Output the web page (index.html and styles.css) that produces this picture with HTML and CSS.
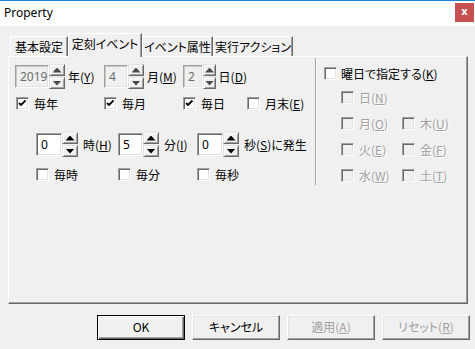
FILE: index.html
```html
<!DOCTYPE html>
<html lang="ja">
<head>
<meta charset="utf-8">
<title>Property</title>
<link rel="stylesheet" href="styles.css">
</head>
<body>
<div class="window">
  <div class="titlebar">
    <span class="title">Property</span>
    <span class="close">x</span>
  </div>
  <div class="client">
    <div class="tabs">
      <div class="tab t1">基本設定</div>
      <div class="tab active t2">定刻イベント</div>
      <div class="tab t3">イベント属性</div>
      <div class="tab t4">実行アクション</div>
    </div>
    <div class="panel">
      <div class="left">
        <div class="grid-date">
          <div class="item">
            <div class="edit dis w34">2019</div>
            <div class="ud dis"><span class="b up"><i></i></span><span class="b dn"><i></i></span></div>
            <span class="lab">年(<u>Y</u>)</span>
          </div>
          <div class="item">
            <div class="edit dis w24">4</div>
            <div class="ud dis"><span class="b up"><i></i></span><span class="b dn"><i></i></span></div>
            <span class="lab">月(<u>M</u>)</span>
          </div>
          <div class="item">
            <div class="edit dis w25">2</div>
            <div class="ud dis"><span class="b up"><i></i></span><span class="b dn"><i></i></span></div>
            <span class="lab">日(<u>D</u>)</span>
          </div>
          <div></div>
          <label class="check c1"><span class="cb on"><svg viewBox="0 0 11 11" width="11" height="11"><path d="M2 5 L4 7 L8.5 2.5" fill="none" stroke="#000" stroke-width="1.8"/></svg></span><span>毎年</span></label>
          <label class="check"><span class="cb on"><svg viewBox="0 0 11 11" width="11" height="11"><path d="M2 5 L4 7 L8.5 2.5" fill="none" stroke="#000" stroke-width="1.8"/></svg></span><span>毎月</span></label>
          <label class="check"><span class="cb on"><svg viewBox="0 0 11 11" width="11" height="11"><path d="M2 5 L4 7 L8.5 2.5" fill="none" stroke="#000" stroke-width="1.8"/></svg></span><span>毎日</span></label>
          <label class="check"><span class="cb"></span><span>月末(<u>E</u>)</span></label>
        </div>
        <div class="grid-time">
          <div class="item">
            <div class="edit w26">0</div>
            <div class="ud"><span class="b up"><i></i></span><span class="b dn"><i></i></span></div>
            <span class="lab l2">時(<u>H</u>)</span>
          </div>
          <div class="item">
            <div class="edit w25">5</div>
            <div class="ud"><span class="b up"><i></i></span><span class="b dn"><i></i></span></div>
            <span class="lab l2">分(<u>I</u>)</span>
          </div>
          <div class="item">
            <div class="edit w26">0</div>
            <div class="ud"><span class="b up"><i></i></span><span class="b dn"><i></i></span></div>
            <span class="lab l2">秒(<u>S</u>)に発生</span>
          </div>
          <label class="check"><span class="cb"></span><span>毎時</span></label>
          <label class="check"><span class="cb"></span><span>毎分</span></label>
          <label class="check"><span class="cb"></span><span>毎秒</span></label>
        </div>
      </div>
      <div class="sep"></div>
      <div class="right">
        <label class="check head"><span class="cb"></span><span>曜日で指定する(<u>K</u>)</span></label>
        <div class="grid-week">
          <label class="check dis"><span class="cb"></span><span>日(<u>N</u>)</span></label>
          <div></div>
          <label class="check dis"><span class="cb"></span><span>月(<u>O</u>)</span></label>
          <label class="check dis"><span class="cb"></span><span>木(<u>U</u>)</span></label>
          <label class="check dis"><span class="cb"></span><span>火(<u>E</u>)</span></label>
          <label class="check dis"><span class="cb"></span><span>金(<u>F</u>)</span></label>
          <label class="check dis"><span class="cb"></span><span>水(<u>W</u>)</span></label>
          <label class="check dis"><span class="cb"></span><span>土(<u>T</u>)</span></label>
        </div>
      </div>
    </div>
    <div class="buttons">
      <div class="btn default">OK</div>
      <div class="btn">キャンセル</div>
      <div class="btn dis">適用(<u>A</u>)</div>
      <div class="btn dis">リセット(<u>R</u>)</div>
    </div>
  </div>
</div>
</body>
</html>
```
FILE: styles.css
```css
* { box-sizing: border-box; }
html, body {
  margin: 0;
  padding: 0;
  background: #f0f0f0;
}
body {
  font-family: "Noto Sans CJK JP", "Noto Sans", sans-serif;
  font-size: 12px;
  color: #000;
  font-feature-settings: "palt";
}
.window {
  width: 475px;
  height: 349px;
  overflow: hidden;
  background: #f0f0f0;
}
.titlebar {
  height: 26px;
  background: #fff;
  border-top: 1px solid #1883d7;
  display: flex;
  align-items: flex-start;
  justify-content: space-between;
}
.title {
  font-family: "Noto Sans", "Liberation Sans", sans-serif;
  font-size: 12px;
  line-height: 23px;
  padding-left: 4px;
  color: #000;
}
.close {
  width: 19px;
  height: 19px;
  margin-top: 2px;
  margin-right: 1px;
  background: #c75050;
  color: #fff;
  font-family: "DejaVu Sans", sans-serif;
  font-weight: bold;
  font-size: 10px;
  line-height: 17px;
  text-align: center;
}
.client {
  display: flex;
  flex-direction: column;
}
.tabs {
  display: flex;
  align-items: flex-end;
  height: 23px;
  margin: 7px 0 0 10px;
  position: relative;
  z-index: 2;
}
.tab {
  height: 20px;
  border-top: 1px solid #fff;
  border-left: 1px solid #fff;
  border-right: 1px solid #696969;
  box-shadow: inset -1px 0 #a0a0a0;
  text-align: center;
  line-height: 19px;
  background: #f0f0f0;
}
.t1 { width: 58px; }
.t2 { width: 74px; }
.t3 { width: 71px; }
.t4 { width: 80px; }
.tab.active {
  height: 24px;
  margin-bottom: -1px;
  line-height: 20px;
}
.panel {
  margin-left: 8px;
  width: 460px;
  height: 248px;
  border-top: 1px solid #fff;
  border-left: 1px solid #fff;
  border-right: 1px solid #696969;
  border-bottom: 1px solid #696969;
  box-shadow: inset -1px -1px #a0a0a0;
  display: flex;
  align-items: flex-start;
}
.left {
  width: 306px;
  padding: 7px 0 0 6px;
}
.grid-date {
  display: grid;
  grid-template-columns: 89px 79px 64px auto;
  grid-template-rows: 25px 16px;
  row-gap: 6px;
}
.grid-time {
  display: grid;
  grid-template-columns: 82px 79px auto;
  grid-template-rows: 25px 16px;
  row-gap: 9px;
  margin: 21px 0 0 21px;
}
.item {
  display: flex;
  align-items: center;
}
.edit {
  height: 23px;
  border: 1px solid;
  border-color: #a0a0a0 #fff #fff #a0a0a0;
  box-shadow: inset 1px 1px #696969, inset -1px -1px #e3e3e3;
  background: #fff;
  padding-left: 4px;
  line-height: 21px;
  font-family: "Noto Sans", "Liberation Sans", sans-serif;
  font-size: 12px;
}
.edit.dis {
  background: #f0f0f0;
  color: #6d6d6d;
  box-shadow: inset 1px 1px #c8c8c8, inset -1px -1px #e3e3e3;
}
.w24 { width: 24px; }
.w25 { width: 25px; }
.w26 { width: 26px; }
.w34 { width: 34px; }
.ud {
  width: 16px;
  height: 25px;
  display: flex;
  flex-direction: column;
  justify-content: space-between;
}
.ud .b {
  height: 12px;
  border: 1px solid;
  border-color: #e3e3e3 #696969 #696969 #e3e3e3;
  box-shadow: inset 1px 1px #fff, inset -1px -1px #a0a0a0;
  background: #f0f0f0;
  display: flex;
  align-items: center;
  justify-content: center;
}
.ud .b i {
  display: block;
  width: 9px;
  height: 5px;
  background: #000;
}
.ud .up i { clip-path: polygon(50% 0, 100% 100%, 0 100%); }
.ud .dn i { clip-path: polygon(0 0, 100% 0, 50% 100%); }
.ud.dis .b i { background: #4a4a4a; }
.lab {
  margin-left: 3px;
  white-space: nowrap;
}
.lab.l2 { margin-left: 5px; }
.check {
  display: flex;
  align-items: center;
  gap: 5px;
  white-space: nowrap;
}
.c1 { margin-left: 1px; }
.cb {
  width: 13px;
  height: 13px;
  flex: none;
  border: 1px solid;
  border-color: #a0a0a0 #fff #fff #a0a0a0;
  box-shadow: inset 1px 1px #696969, inset -1px -1px #e3e3e3;
  background: #fff;
  display: flex;
  align-items: center;
  justify-content: center;
}
.cb svg { display: block; }
.check.dis { color: #a0a0a0; text-shadow: 1px 1px #fff; }
.check.dis .cb { background: #f0f0f0; }
.sep {
  width: 2px;
  height: 127px;
  margin-top: 1px;
  border-left: 1px solid #a0a0a0;
  border-right: 1px solid #fff;
}
.right {
  padding: 7px 0 0 7px;
}
.check.head {
  height: 18px;
  gap: 4px;
}
.grid-week {
  display: grid;
  grid-template-columns: 61px auto;
  grid-auto-rows: 26px;
  margin: 2px 0 0 17px;
}
.buttons {
  display: flex;
  justify-content: flex-end;
  gap: 7px;
  padding-right: 5px;
  margin-top: 11px;
}
.btn {
  width: 88px;
  height: 25px;
  border: 1px solid;
  border-color: #fff #696969 #696969 #fff;
  box-shadow: inset -1px -1px #a0a0a0, inset 1px 1px #e3e3e3;
  background: #f0f0f0;
  text-align: center;
  line-height: 22px;
}
.btn.default {
  border-color: #000;
  box-shadow: inset 1px 1px #fff, inset -1px -1px #696969, inset -2px -2px #a0a0a0;
}
.btn.dis { color: #a0a0a0; }
```
